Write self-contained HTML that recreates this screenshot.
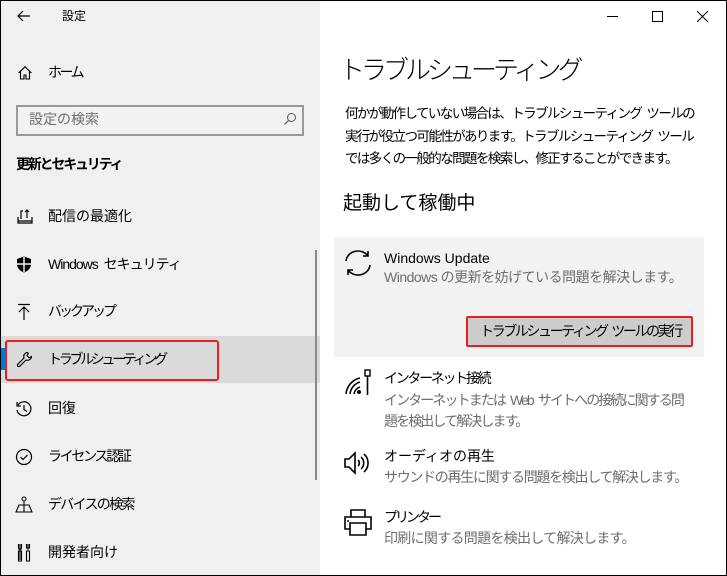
<!DOCTYPE html>
<html><head><meta charset="utf-8"><style>
*{margin:0;padding:0;box-sizing:border-box}
body{width:727px;height:576px;overflow:hidden;font-family:"Liberation Sans","Noto Sans CJK JP",sans-serif;position:relative;background:#fff}
.frame{position:absolute;left:0;top:0;width:727px;height:576px;border:1px solid #000;z-index:10;pointer-events:none}
.left{position:absolute;left:0;top:0;width:320px;height:576px;background:#f0f0f0}
.t{position:absolute;white-space:nowrap;line-height:1;color:#000}
.ic{position:absolute}
.s14{font-size:14px}
.g{color:#6d6d6d}
.w{word-spacing:3px}
</style></head><body>
<div class="left"></div>
<div class="ic" style="left:0;top:336px;width:320px;height:47px;background:#dadada"></div>
<div class="ic" style="left:1px;top:348px;width:4px;height:22px;background:#0078d7"></div>
<div class="ic" style="left:5px;top:340px;width:214px;height:41px;border:2px solid #ee1c1c;border-radius:3px"></div>
<div class="ic" style="left:315px;top:250px;width:2px;height:230px;background:#8a8a8a"></div>

<svg class="ic" style="left:16px;top:8px" width="16" height="16" viewBox="0 0 16 16"><path d="M14 8H2M7 3L2 8l5 5" fill="none" stroke="#000" stroke-width="1.2"/></svg>
<div class="t" style="left:62px;top:10px;font-size:12px">設定</div>

<svg class="ic" style="left:17px;top:65px" width="16" height="16" viewBox="0 0 16 16"><path d="M1.5 8L8 1.8 14.5 8M3.5 6.5V14h3.5v-4h2v4h3.5V6.5" fill="none" stroke="#000" stroke-width="1.1"/></svg>
<div class="t s14" style="left:48px;top:65px;letter-spacing:-2.5px">ホーム</div>

<div class="ic" style="left:16px;top:105px;width:288px;height:31px;border:2px solid #9a9a9a;background:#f2f2f2"></div>
<div class="t s14 g" style="left:29px;top:112px">設定の検索</div>
<svg class="ic" style="left:283px;top:112px" width="14" height="14" viewBox="0 0 14 14"><circle cx="8.5" cy="5.5" r="4" fill="none" stroke="#555" stroke-width="1"/><path d="M5.6 8.4L1.5 12.5" stroke="#555" stroke-width="1.2"/></svg>

<div class="t s14" style="left:16px;top:157px;font-weight:bold;letter-spacing:-2.2px">更新とセキュリティ</div>

<svg class="ic" style="left:16px;top:207px" width="18" height="18" viewBox="0 0 18 18"><path d="M2 10v6h14v-6M2 14h14M7 4h-2v8M11 3v8M9 5l2-2 2 2" fill="none" stroke="#000" stroke-width="1.2"/></svg>
<div class="t s14" style="left:48px;top:209px">配信の最適化</div>

<svg class="ic" style="left:16px;top:256px" width="16" height="17" viewBox="0 0 16 17"><path d="M8 0.5L1 3v5c0 4 3 7 7 8.5 4-1.5 7-4.5 7-8.5V3z" fill="#000"/><path d="M8 1v15M1 8h14" stroke="#f0f0f0" stroke-width="1.5"/></svg>
<div class="t s14 w" style="left:48px;top:257px;letter-spacing:-1px">Windows セキュリティ</div>

<svg class="ic" style="left:16px;top:303px" width="16" height="18" viewBox="0 0 16 18"><path d="M2 1.5h12M8 4v13M3 9l5-5 5 5" fill="none" stroke="#000" stroke-width="1.2"/></svg>
<div class="t s14" style="left:48px;top:304px;letter-spacing:-3px">バックアップ</div>

<svg class="ic" style="left:16px;top:351px" width="17" height="17" viewBox="0 0 17 17"><path d="M11.5 1.5a4 4 0 0 0-3.5 5.5L1.8 13.2a1.3 1.3 0 0 0 2 2L10 9a4 4 0 0 0 5.5-3.5l-2.3 1.3-2.2-2.2 1.3-2.3z" fill="none" stroke="#000" stroke-width="1.1"/></svg>
<div class="t s14" style="left:48px;top:352px;letter-spacing:-3.3px">トラブルシューティング</div>

<svg class="ic" style="left:15px;top:400px" width="18" height="18" viewBox="0 0 18 18"><path d="M3 5a7 7 0 1 1-1 5M2 2v4h4M9 5v4.5l3 2" fill="none" stroke="#000" stroke-width="1.2"/></svg>
<div class="t s14" style="left:48px;top:401px">回復</div>

<svg class="ic" style="left:15px;top:448px" width="18" height="18" viewBox="0 0 18 18"><circle cx="9" cy="9" r="7.5" fill="none" stroke="#000" stroke-width="1.2"/><path d="M5.5 9l2.5 2.5 4.5-4.5" fill="none" stroke="#000" stroke-width="1.2"/></svg>
<div class="t s14" style="left:48px;top:449px;letter-spacing:-2.3px">ライセンス認証</div>

<svg class="ic" style="left:15px;top:496px" width="18" height="18" viewBox="0 0 18 18"><circle cx="9" cy="3" r="2" fill="none" stroke="#000" stroke-width="1.1"/><path d="M9 5v4M4 9h10l3 7H1zM9 9v7" fill="none" stroke="#000" stroke-width="1.1"/></svg>
<div class="t s14" style="left:48px;top:497px;letter-spacing:-1.7px">デバイスの検索</div>

<svg class="ic" style="left:17px;top:543px" width="14" height="19" viewBox="0 0 14 19"><path d="M3 1v5M1.5 1v4a1.5 1.5 0 0 0 3 0V1M3 7v10M1.5 8h3v10h-3zM11 1v6M9.5 1v4h3V1M9.5 8h3v10h-3z" fill="none" stroke="#000" stroke-width="1.1"/></svg>
<div class="t s14" style="left:48px;top:545px">開発者向け</div>

<div class="ic" style="left:607px;top:16px;width:11px;height:1px;background:#000"></div>
<div class="ic" style="left:652px;top:11px;width:11px;height:11px;border:1px solid #000"></div>
<svg class="ic" style="left:697px;top:11px" width="11" height="11" viewBox="0 0 11 11"><path d="M0 0L11 11M11 0L0 11" stroke="#000" stroke-width="1"/></svg>

<div class="t" style="left:339px;top:57px;font-size:26px;font-weight:300;letter-spacing:-4px">トラブルシューティング</div>
<div class="t w" style="left:345px;top:103px;font-size:13.5px;line-height:22.5px;letter-spacing:-1.6px">何かが動作していない場合は、トラブルシューティング ツールの<br>実行が役立つ可能性があります。トラブルシューティング ツール<br>では多くの一般的な問題を検索し、修正することができます。</div>
<div class="t" style="left:343px;top:194px;font-size:19px">起動して稼働中</div>

<div class="ic" style="left:334px;top:237px;width:370px;height:120px;background:#f2f2f2"></div>
<svg class="ic" style="left:343px;top:248px" width="30" height="30" viewBox="0 0 30 30"><path d="M3 13A12 11 0 0 1 25 8M27 17A12 11 0 0 1 5 22M25 3v5h-5M5 27v-5h5" fill="none" stroke="#000" stroke-width="1.6"/></svg>
<div class="t s14" style="left:384px;top:251px">Windows Update</div>
<div class="t s14 g" style="left:384px;top:270px;letter-spacing:-0.5px">Windows の更新を妨げている問題を解決します。</div>
<div class="ic" style="left:466px;top:316px;width:227px;height:31px;background:#ccc;border:2px solid #ee1c1c;border-radius:2px"></div>
<div class="t s14 w" style="left:480px;top:324px;letter-spacing:-2.4px">トラブルシューティング ツールの実行</div>

<svg class="ic" style="left:344px;top:368px" width="28" height="28" viewBox="0 0 28 28"><path d="M2 26A18 18 0 0 1 16 10M6 26A14 14 0 0 1 16 14M10 26A9 9 0 0 1 16 19" fill="none" stroke="#000" stroke-width="1.6"/><circle cx="15" cy="24" r="2" fill="#000"/><rect x="21" y="2" width="5" height="6" fill="none" stroke="#000" stroke-width="1.4"/><path d="M23.5 8v19" stroke="#000" stroke-width="1.6"/></svg>
<div class="t s14" style="left:384px;top:371px;letter-spacing:-2.3px">インターネット接続</div>
<div class="t s14 g w" style="left:384px;top:390px;line-height:21px;letter-spacing:-1.9px">インターネットまたは Web サイトへの接続に関する問<br>題を検出して解決します。</div>

<svg class="ic" style="left:343px;top:449px" width="30" height="28" viewBox="0 0 30 28"><path d="M2 10h4l6-6v20l-6-6H2z" fill="none" stroke="#000" stroke-width="1.6"/><path d="M15 11a4 4 0 0 1 0 6M18 8a8 8 0 0 1 0 12M21 5a12 12 0 0 1 0 18" fill="none" stroke="#000" stroke-width="1.6"/></svg>
<div class="t s14" style="left:384px;top:449px">オーディオの再生</div>
<div class="t s14 g" style="left:384px;top:470px;letter-spacing:-1.3px">サウンドの再生に関する問題を検出して解決します。</div>

<svg class="ic" style="left:343px;top:508px" width="30" height="28" viewBox="0 0 30 28"><path d="M8 2h14v7H8zM7 21H2V9h26v12h-5M7 15h16v12H7z" fill="none" stroke="#000" stroke-width="1.6"/><path d="M4 13h2" stroke="#000" stroke-width="1.4"/></svg>
<div class="t s14" style="left:384px;top:510px;letter-spacing:-3px">プリンター</div>
<div class="t s14 g" style="left:384px;top:531px;letter-spacing:-0.7px">印刷に関する問題を検出して解決します。</div>

<div class="frame"></div>
</body></html>
